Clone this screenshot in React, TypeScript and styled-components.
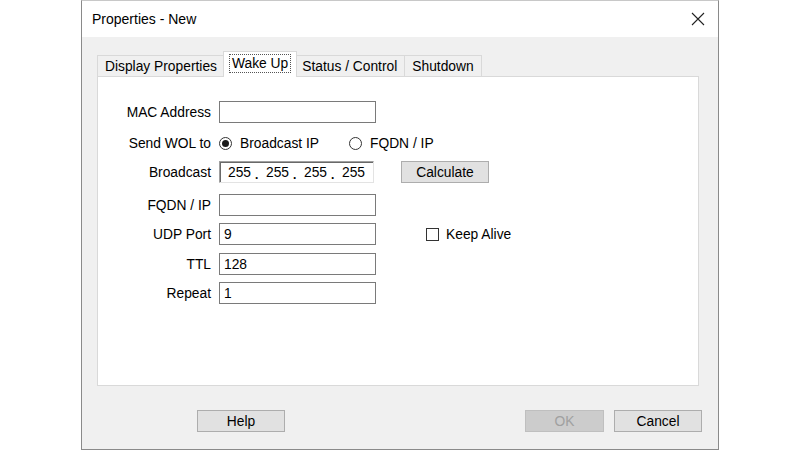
import styled, { createGlobalStyle } from 'styled-components'

const Global = createGlobalStyle`
  html, body {
    margin: 0;
    padding: 0;
    background: #ffffff;
    font-family: "Liberation Sans", Arial, sans-serif;
    color: #000;
  }
`

const Page = styled.div`
  width: 800px;
  height: 450px;
  padding-left: 81px;
  box-sizing: border-box;
  overflow: hidden;
`

const Window = styled.div`
  width: 638px;
  height: 450px;
  box-sizing: border-box;
  border: 1px solid #8a8a8a;
  border-top-color: #c8c8c8;
  display: flex;
  flex-direction: column;
  background: #f0f0f0;
`

const TitleBar = styled.div`
  height: 36px;
  background: #ffffff;
  display: flex;
  align-items: center;
  justify-content: space-between;
  padding: 0 12px 0 10px;
  font-size: 14px;
  flex-shrink: 0;
`

const Close = styled.div`
  width: 16px;
  height: 16px;
  display: flex;
  align-items: center;
  justify-content: center;
`

const Body = styled.div`
  flex: 1;
  display: flex;
  flex-direction: column;
  padding: 14px 19px 0 15px;
  font-size: 13.8px;
`

const TabStrip = styled.div`
  display: flex;
  align-items: flex-end;
  height: 26px;
  position: relative;
  z-index: 1;
`

const Tab = styled.div<{ $active?: boolean }>`
  height: ${(p) => (p.$active ? 26 : 22)}px;
  box-sizing: border-box;
  border: 1px solid #d9d9d9;
  border-bottom: ${(p) => (p.$active ? 'none' : '1px solid #d9d9d9')};
  margin-left: ${(p) => (p.$active ? -2 : -1)}px;
  margin-right: ${(p) => (p.$active ? -2 : 0)}px;
  background: ${(p) => (p.$active ? '#ffffff' : '#f0f0f0')};
  display: flex;
  align-items: center;
  padding: ${(p) => (p.$active ? '0 8px 3px' : '0 7px')};
  position: relative;
  z-index: ${(p) => (p.$active ? 2 : 1)};
  &:first-child {
    margin-left: 0;
  }
`

const Focus = styled.span`
  border: 1px dotted #555;
  padding: 1px 2px;
  margin: 0 -3px;
`

const Panel = styled.div`
  height: 310px;
  box-sizing: border-box;
  background: #ffffff;
  border: 1px solid #d9d9d9;
  margin-top: -1px;
  padding: 24px 0 0 0;
`

const Row = styled.div<{ $top: number }>`
  display: flex;
  align-items: center;
  height: 22px;
  margin-top: ${(p) => p.$top}px;
`

const Label = styled.div`
  width: 113px;
  text-align: right;
  padding-right: 8px;
  flex-shrink: 0;
`

const Field = styled.div`
  width: 157px;
  height: 22px;
  box-sizing: border-box;
  border: 1px solid #7a7a7a;
  background: #fff;
  display: flex;
  align-items: center;
  padding-left: 4px;
`

const IpField = styled.div`
  width: 155px;
  height: 22px;
  box-sizing: border-box;
  border-top: 1px solid #a0a0a0;
  border-left: 1px solid #a0a0a0;
  border-right: 1px solid #e3e3e3;
  border-bottom: 1px solid #e3e3e3;
  box-shadow: inset 1px 1px 0 #696969;
  background: #fff;
  display: flex;
  align-items: center;
  padding-left: 8px;
`

const Octet = styled.span`
  width: 27px;
`

const Dot = styled.span`
  width: 11px;
  position: relative;
  top: 3px;
  font-weight: bold;
  font-size: 12px;
`

const Radio = styled.label`
  display: flex;
  align-items: center;
  gap: 8px;
`

const RadioCircle = styled.span<{ $on?: boolean }>`
  width: 13px;
  height: 13px;
  box-sizing: border-box;
  border-radius: 50%;
  border: 1px solid #333;
  background: #fff;
  display: flex;
  align-items: center;
  justify-content: center;
  &::after {
    content: '';
    display: ${(p) => (p.$on ? 'block' : 'none')};
    width: 7px;
    height: 7px;
    border-radius: 50%;
    background: #1a1a1a;
  }
`

const Button = styled.div<{ $disabled?: boolean; $w?: number }>`
  width: ${(p) => p.$w ?? 88}px;
  height: 22px;
  box-sizing: border-box;
  border: 1px solid ${(p) => (p.$disabled ? '#bfbfbf' : '#adadad')};
  background: ${(p) => (p.$disabled ? '#cccccc' : '#e1e1e1')};
  color: ${(p) => (p.$disabled ? '#a0a0a0' : '#000')};
  display: flex;
  align-items: center;
  justify-content: center;
`

const Side = styled.div<{ $left: number }>`
  margin-left: ${(p) => p.$left}px;
`

const Check = styled.label`
  display: flex;
  align-items: center;
  gap: 7px;
`

const Box = styled.span`
  width: 13px;
  height: 13px;
  box-sizing: border-box;
  border: 1px solid #333;
  background: #fff;
`

const Footer = styled.div`
  display: flex;
  align-items: center;
  height: 62px;
  padding: 8px 0 0 100px;
  margin-right: -3px;
  box-sizing: border-box;
`

const Spacer = styled.div`
  flex: 1;
`

const FooterGap = styled.div`
  width: 10px;
`

export default function App() {
  return (
    <Page>
      <Global />
      <Window>
        <TitleBar>
          <span>Properties - New</span>
          <Close>
            <svg width="14" height="14" viewBox="0 0 14 14">
              <path d="M1 1 L13 13 M13 1 L1 13" stroke="#222" strokeWidth="1.1" />
            </svg>
          </Close>
        </TitleBar>
        <Body>
          <TabStrip>
            <Tab>Display Properties</Tab>
            <Tab $active>
              <Focus>Wake Up</Focus>
            </Tab>
            <Tab>Status / Control</Tab>
            <Tab>Shutdown</Tab>
          </TabStrip>
          <Panel>
            <Row $top={0}>
              <Label>MAC Address</Label>
              <Field />
            </Row>
            <Row $top={9}>
              <Label>Send WOL to</Label>
              <Radio>
                <RadioCircle $on />
                Broadcast IP
              </Radio>
              <Side $left={30}>
                <Radio>
                  <RadioCircle />
                  FQDN / IP
                </Radio>
              </Side>
            </Row>
            <Row $top={7}>
              <Label>Broadcast</Label>
              <IpField>
                <Octet>255</Octet>
                <Dot>.</Dot>
                <Octet>255</Octet>
                <Dot>.</Dot>
                <Octet>255</Octet>
                <Dot>.</Dot>
                <Octet>255</Octet>
              </IpField>
              <Side $left={27}>
                <Button>Calculate</Button>
              </Side>
            </Row>
            <Row $top={11}>
              <Label>FQDN / IP</Label>
              <Field />
            </Row>
            <Row $top={7}>
              <Label>UDP Port</Label>
              <Field>9</Field>
              <Side $left={50}>
                <Check>
                  <Box />
                  Keep Alive
                </Check>
              </Side>
            </Row>
            <Row $top={8}>
              <Label>TTL</Label>
              <Field>128</Field>
            </Row>
            <Row $top={7}>
              <Label>Repeat</Label>
              <Field>1</Field>
            </Row>
          </Panel>
          <Footer>
            <Button>Help</Button>
            <Spacer />
            <Button $disabled $w={79}>
              OK
            </Button>
            <FooterGap />
            <Button>Cancel</Button>
          </Footer>
        </Body>
      </Window>
    </Page>
  )
}
